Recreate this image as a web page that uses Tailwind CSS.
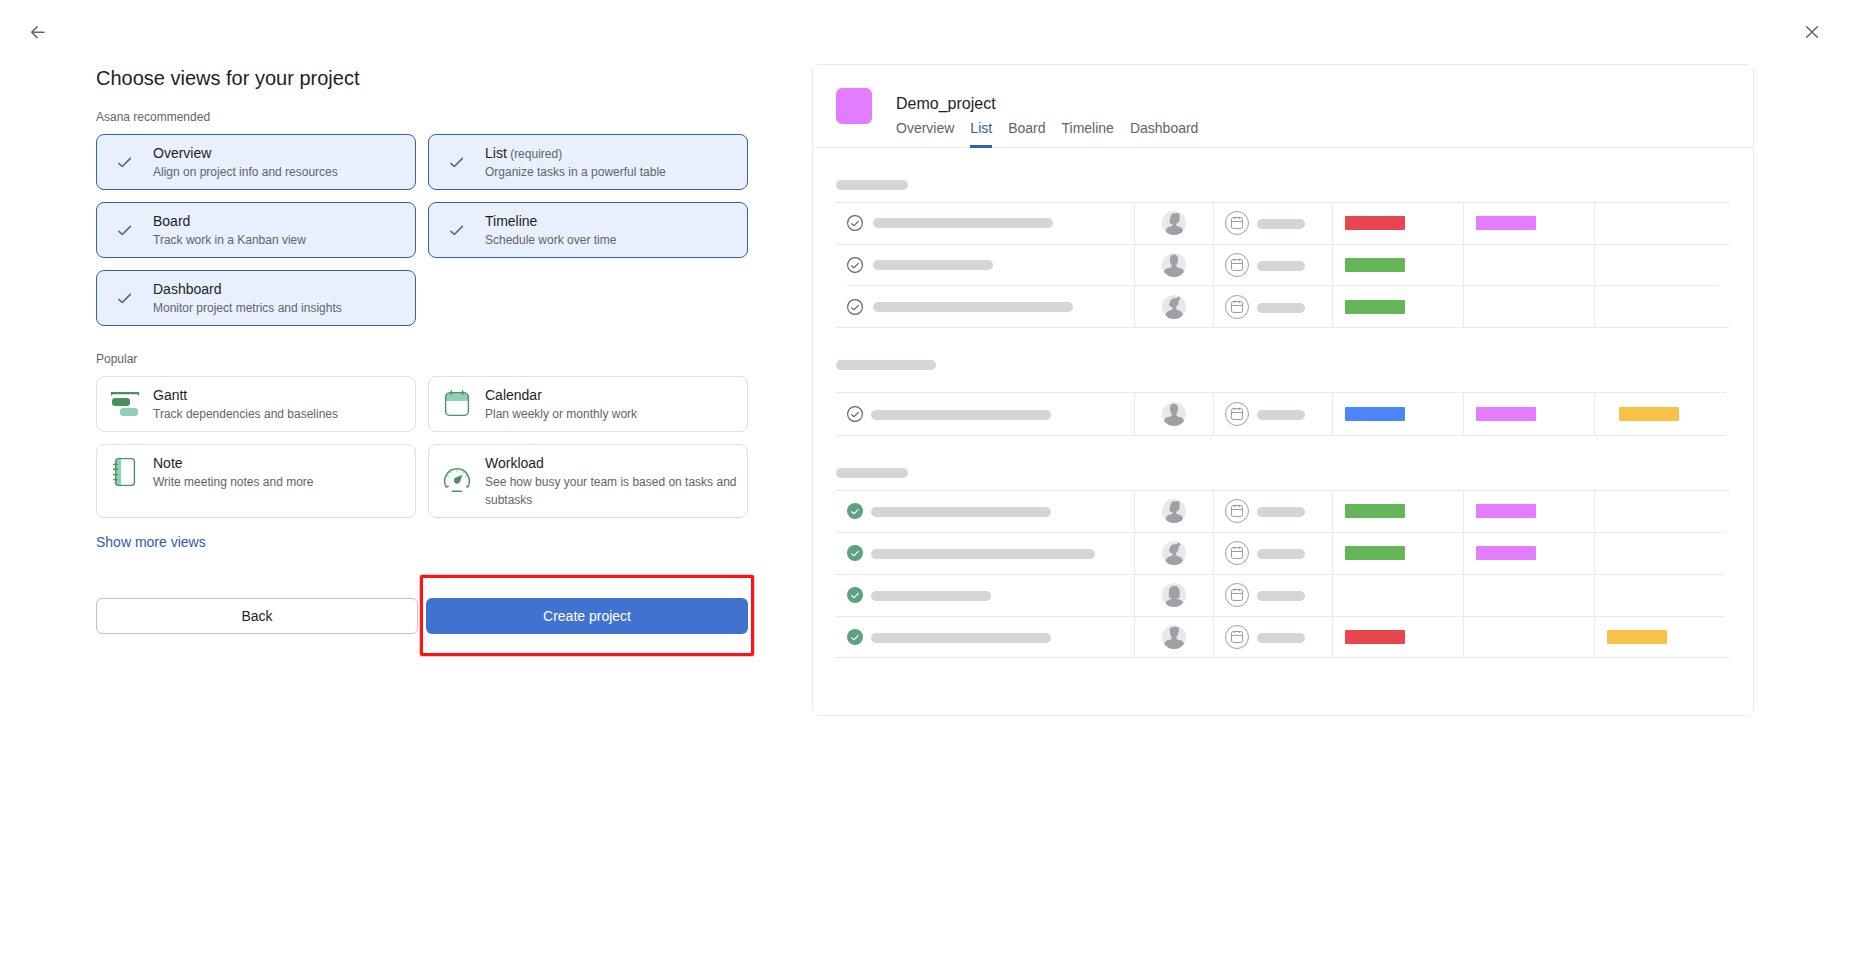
<!DOCTYPE html>
<html lang="en">
<head>
  <meta charset="UTF-8">
  <title>Choose views for your project</title>
  <script src="https://cdn.jsdelivr.net/npm/@tailwindcss/browser@4"></script>
</head>
<body class="bg-white text-[#1e1f21] font-['Liberation_Sans',Arial,sans-serif] h-screen overflow-hidden">
  <header class="h-16 flex items-center justify-between pl-[30px] pr-[29px] text-[#636465]">
    <button aria-label="Back">
      <svg class="w-4 h-4" viewBox="0 0 16 16" fill="none" stroke="currentColor" stroke-width="1.5" stroke-linecap="round" stroke-linejoin="round"><path d="M14 8.3H1.7M7 2.9L1.7 8.3L7 13.6"/></svg>
    </button>
    <button aria-label="Close">
      <svg class="w-4 h-4" viewBox="0 0 16 16" fill="none" stroke="currentColor" stroke-width="1.5" stroke-linecap="round"><path d="M2.7 2.7L13.3 13.3M13.3 2.7L2.7 13.3"/></svg>
    </button>
  </header>

  <main class="flex items-start pl-24">
    <section class="w-[652px]">
      <h1 class="text-xl leading-7">Choose views for your project</h1>
      <h2 class="mt-4 text-xs leading-[18px] text-[#636465]">Asana recommended</h2>
      <div id="recommended" class="mt-2 grid grid-cols-2 gap-3"></div>
      <h2 class="mt-6 text-xs leading-[18px] text-[#636465]">Popular</h2>
      <div id="popular" class="mt-2 grid grid-cols-2 gap-3"></div>
      <a href="#" class="mt-3.5 block text-sm leading-5 text-[#2f5ab0]">Show more views</a>
      <div class="mt-[46px] grid grid-cols-2 gap-2">
        <button class="h-9 rounded-md border border-[#c2c0c5] text-sm">Back</button>
        <div class="relative">
          <button class="h-9 w-full rounded-md bg-[#4272d0] text-sm text-white">Create project</button>
          <div class="absolute -top-[23px] -bottom-[22px] -left-[6px] -right-[6px] rounded-[2px] border-3 border-[#ff1212] shadow-[0_0_0_0.5px_#ff8a8a]"></div>
        </div>
      </div>
    </section>

    <section class="ml-16 w-[942px]">
      <div class="mx-[5px] h-px bg-[#edeaea]"></div>
      <div class="my-1 h-[642px] border-x border-[#edeaea]">
        <div class="flex h-[79px] border-b border-[#edeaea] pl-[23px]">
          <div class="mt-[19px] h-9 w-9 rounded-md bg-[#e37cff]"></div>
          <div class="ml-6 pt-[23px]">
            <div class="text-base leading-6">Demo_project</div>
            <nav class="mt-0.5 flex gap-4 text-sm leading-5 text-[#636465]">
              <span>Overview</span>
              <span class="h-[30px] border-b-3 border-[#335fb5] text-[#2f5ab0]">List</span>
              <span>Board</span>
              <span>Timeline</span>
              <span>Dashboard</span>
            </nav>
          </div>
        </div>
        <div id="sections" class="pl-[23px]"></div>
      </div>
      <div class="mx-[5px] h-px bg-[#edeaea]"></div>
    </section>
  </main>

  <!-- shared shapes -->
  <svg width="0" height="0" class="absolute">
    <defs>
      <pattern id="dots" width="2.6" height="2.6" patternUnits="userSpaceOnUse"><circle cx="1" cy="1" r=".5" fill="#8b8b92"/></pattern>
      <pattern id="dotsLight" width="2.6" height="2.6" patternUnits="userSpaceOnUse"><circle cx="1" cy="1" r=".4" fill="#dbd8d9"/></pattern>
      <clipPath id="round"><circle cx="12" cy="12" r="12"/></clipPath>
      <path id="curl" d="M9.4 3.6C10.2 1.8 12.5 2.8 13.6 2.2C15.4 1.8 18.2 2.8 17.8 4.6C17.4 6 17.8 8 17.4 9.6C17 11.6 15.6 12.4 14.2 12.8V14.8C15.4 15.4 17.2 15.4 18.8 16.4C20.2 17.4 20.8 18.8 20.8 20V24H3.8V20C3.8 18.8 4.4 17.4 5.8 16.4C7.4 15.4 9.2 15.4 10.4 14.8V13C9 13.2 8 13 8 11.8L7.2 10.4L8.2 8C8 6.2 9.4 5.4 9.4 3.6Z"/>
      <path id="plain" d="M12 1.8C14.8 1.8 16.2 3.6 16 5.8C16.2 8.4 15.6 10.4 14.4 11.4V14C15.6 15 18.6 14.8 20.2 16C21.6 17.2 22 18.4 22 20V24H2V20C2 18.4 2.4 17.2 3.8 16C5.4 14.8 8.4 15 9.6 14V11.4C8.4 10.4 7.8 8.4 8 5.8C7.8 3.6 9.2 1.8 12 1.8Z"/>
      <path id="bun" d="M9.4 4.6C11 3 13.2 2.9 14.8 3.7C14.6 2.2 16 1.4 17.2 2C18.6 2.7 18.6 4.9 17 5.4C16.7 5.5 16.5 5.4 16.4 5.4C17 8 16 10.4 14.2 11.6V14.6C15.4 15.2 17.2 15.4 18.8 16.4C20.2 17.4 20.8 18.8 20.8 20V24H3.8V20C3.8 18.8 4.4 17.4 5.8 16.4C7.4 15.4 9.2 15.2 10.4 14.6V12C9 12.3 8 12.2 8 11L6.8 9.8L8 7.6C8 6.2 8.4 5.4 9.4 4.6Z"/>
      <path id="bob" d="M12.2 3C16 3 17.6 5.6 17.6 8.4C17.6 10.8 18.2 12.4 17.4 14.2C16.6 15.4 15.4 15.4 14.4 15.2C14.8 16.6 17.4 16 19.4 17.4C20.6 18.4 21 19.4 21 20.4V24H3.8V20.4C3.8 19.4 4.2 18.4 5.4 17.4C7.4 16 9.8 16.6 10.2 15.2C9.2 15.4 7.8 15.4 7.2 14.2C6.4 12.4 7 10.8 7 8.4C7 5.6 8.6 3 12.2 3Z"/>
      <path id="flat" d="M9 2.6C10.8 1.6 14.6 1.6 16.2 2.6C17.4 3.4 16.8 5 16.6 6.6C16.2 8.8 15.8 10.8 14.4 11.8V14C15.6 15 18.6 14.8 20.2 16C21.6 17.2 22 18.4 22 20V24H2.4V20C2.4 18.4 2.8 17.2 4 16C5.6 14.8 8.4 15 9.6 14V11.8C8.4 10.8 8 8.8 7.8 6.6C7.4 5 7.2 3.4 9 2.6Z"/>
    </defs>
  </svg>

  <script>
    const check = '<svg class="w-4 h-4" viewBox="0 0 16 16" fill="none" stroke="#3f62a8" stroke-width="1.5" stroke-linecap="round" stroke-linejoin="round"><path d="M1.9 9.4L5.3 12.5L13.4 4.4"/></svg>';
    const icons = {
      gantt: '<svg class="w-8 h-8" viewBox="0 0 32 32"><path d="M2 4H30V8L28.2 6.2H3.8L2 8Z" fill="#4a8f5d"/><rect x="3" y="10" width="18" height="8" rx="3" fill="#4a8f5d"/><rect x="11" y="20" width="18" height="8" rx="3" fill="#93cfb5"/></svg>',
      calendar: '<svg class="w-8 h-8" viewBox="0 0 32 32" fill="none" stroke="#4a9461" stroke-width="1.4" stroke-linecap="round"><path d="M4.5 13V9.5Q4.5 4.5 9.5 4.5H22.5Q27.5 4.5 27.5 9.5V13Z" fill="#93cfb5" stroke="none"/><rect x="4.6" y="4.6" width="22.8" height="22.8" rx="4.5"/><path d="M10.2 2.6V6.6M21.7 2.6V6.6"/></svg>',
      note: '<svg class="w-8 h-8" viewBox="0 0 32 32" fill="none" stroke="#4a9461" stroke-width="1.4" stroke-linecap="round"><path d="M6.6 5Q6.6 2.6 9 2.6H12V29.4H9Q6.6 29.4 6.6 27Z" fill="#93cfb5" stroke="none"/><rect x="6.6" y="2.6" width="18.8" height="26.8" rx="2.8"/><path d="M4.6 8.4H8.4M4.6 13.3H8.4M4.6 18.6H8.4M4.6 23.6H8.4"/></svg>',
      workload: '<svg class="w-8 h-8" viewBox="0 0 32 32" fill="none" stroke="#4a9461" stroke-width="1.5" stroke-linecap="round"><path d="M7.2 21.2L5.2 22A12.3 12.3 0 1 1 26.8 22L25.6 21.2"/><path d="M16 5V7.2M6.3 11L8 12M25.7 11L24 12M9.5 6.8L10.3 8M22.5 6.8L21.7 8" stroke="#93cfb5" stroke-width="1"/><path d="M21.4 9.8L19.2 16.4A3.3 3.3 0 1 1 14.2 12.7Z" fill="#4a9461" stroke="none"/><path d="M11.4 26.3H20.6"/></svg>'
    };

    const recommended = [
      { title: 'Overview', text: 'Align on project info and resources' },
      { title: 'List', note: '(required)', text: 'Organize tasks in a powerful table' },
      { title: 'Board', text: 'Track work in a Kanban view' },
      { title: 'Timeline', text: 'Schedule work over time' },
      { title: 'Dashboard', text: 'Monitor project metrics and insights' }
    ];
    const popular = [
      { icon: 'gantt', title: 'Gantt', text: 'Track dependencies and baselines' },
      { icon: 'calendar', title: 'Calendar', text: 'Plan weekly or monthly work' },
      { icon: 'note', title: 'Note', text: 'Write meeting notes and more', top: true },
      { icon: 'workload', title: 'Workload', text: 'See how busy your team is based on tasks and subtasks' }
    ];

    function body(v) {
      return `<div class="flex-1">
        <div class="text-sm leading-5">${v.title}${v.note ? `<span class="text-xs leading-none text-[#636465]"> ${v.note}</span>` : ''}</div>
        <div class="text-xs leading-[18px] text-[#636465]">${v.text}</div>
      </div>`;
    }

    document.getElementById('recommended').innerHTML = recommended.map(v => `
      <div class="flex items-center rounded-lg border border-[#335fb5] bg-[#e8f0fe] py-2 pl-5">
        <div class="w-9">${check}</div>${body(v)}
      </div>`).join('');

    document.getElementById('popular').innerHTML = popular.map(v => `
      <div class="flex rounded-lg border border-[#e0dfe1] py-2 pl-3 pr-1.5">
        <div class="w-11 ${v.top ? 'self-start pt-[3px]' : 'self-center'}">${icons[v.icon]}</div>${body(v)}
      </div>`).join('');

    const colors = { red: 'bg-[#e8464f]', green: 'bg-[#64b658]', pink: 'bg-[#e37cff]', blue: 'bg-[#4c86fb]', yellow: 'bg-[#f8c148]' };
    const full = 'mr-[23px]';
    // h: row height, line: margins of the divider under the row
    const sections = [
      { head: 'mt-8', title: 72, lineTop: 'mt-3 ' + full, gap: 'gap-2.5', bar: 'mt-[7px]', rows: [
        { h: 'h-[41px]', pt: 'pt-2', bar: 180, who: 'curl', tags: ['red', 'pink'], line: full },
        { h: 'h-10', pt: 'pt-2', bar: 120, who: 'plain', tags: ['green'], line: 'ml-[11px] mr-[34px]' },
        { h: 'h-[41px]', pt: 'pt-[9px]', bar: 200, who: 'bun', tags: ['green'], line: full }
      ]},
      { head: 'mt-8', title: 100, lineTop: 'mt-[22px] mr-[27px]', gap: 'gap-2', bar: 'mt-2', rows: [
        { h: 'h-[42px]', pt: 'pt-[9px]', bar: 180, who: 'plain', tags: ['blue', 'pink', 'yellow'], shift: true, line: 'mr-[27px]' }
      ]},
      { head: 'mt-8', title: 72, lineTop: 'mt-3 ' + full, gap: 'gap-2', bar: 'mt-2', done: true, rows: [
        { h: 'h-[41px]', pt: 'pt-2', bar: 180, who: 'curl', tags: ['green', 'pink'], line: 'mr-7' },
        { h: 'h-[41px]', pt: 'pt-2', bar: 224, who: 'bun', tags: ['green', 'pink'], line: 'mr-7' },
        { h: 'h-[41px]', pt: 'pt-2', bar: 120, who: 'bob', tags: [], line: 'mr-7' },
        { h: 'h-10', pt: 'pt-2', bar: 180, who: 'flat', tags: ['red', null, 'yellow'], line: full }
      ]}
    ];

    const status = done => done
      ? '<svg class="mt-1 w-4 h-4" viewBox="0 0 16 16" fill="none"><circle cx="8" cy="8" r="8" fill="#5da182"/><path d="M4.6 8.7L7 10.7L11.4 6.3" stroke="#fff" stroke-width="1.2" stroke-linecap="round"/></svg>'
      : '<svg class="mt-1 w-4 h-4" viewBox="0 0 16 16" fill="none" stroke="#636465" stroke-width="1.15"><circle cx="8" cy="8" r="7.4"/><path d="M4.6 8.7L7 10.7L11.4 6.3" stroke-linecap="round"/></svg>';
    const avatar = who => `<svg class="w-6 h-6" viewBox="0 0 24 24"><g clip-path="url(#round)"><rect width="24" height="24" fill="#ebe8e9"/><rect width="24" height="24" fill="url(#dotsLight)"/><use href="#${who}" fill="#a2a2a8"/><use href="#${who}" fill="url(#dots)"/></g></svg>`;
    const date = '<svg class="w-6 h-6" viewBox="0 0 24 24" fill="none" stroke="#9f9da1"><circle cx="12" cy="12" r="11.5"/><rect x="6.5" y="6.5" width="11" height="11" rx="1.8"/><path d="M6.5 10.5H17.5M9.5 5.8V8M14.5 5.8V8"/></svg>';

    function tagCell(r, i) {
      const tag = r.tags[i];
      return `<div class="${r.pt} ${i < 2 ? 'border-r border-[#edeaea]' : ''} ${i == 2 && r.shift ? 'pl-6' : 'pl-3'}">
        ${tag ? `<div class="mt-[5px] h-3.5 w-[60px] rounded-[1px] ${colors[tag]}"></div>` : ''}
      </div>`;
    }

    document.getElementById('sections').innerHTML = sections.map(s => `
      <div class="h-2.5 rounded-full bg-[#d6d4d5] ${s.head}" style="width:${s.title}px"></div>
      <div class="h-px bg-[#edeaea] ${s.lineTop}"></div>
      ${s.rows.map(r => `
        <div class="grid grid-cols-[299px_79px_119px_131px_131px_1fr] ${r.h}">
          <div class="flex items-start ${s.gap} border-r border-[#edeaea] pl-[11px] ${r.pt}">
            ${status(s.done)}
            <div class="h-2.5 rounded-full bg-[#d6d4d5] ${s.bar}" style="width:${r.bar}px"></div>
          </div>
          <div class="border-r border-[#edeaea] pl-[27px] ${r.pt}">${avatar(r.who)}</div>
          <div class="flex items-start gap-2 border-r border-[#edeaea] pl-[11px] ${r.pt}">
            ${date}
            <div class="mt-2 h-2.5 w-12 rounded-full bg-[#d6d4d5]"></div>
          </div>
          ${[0, 1, 2].map(i => tagCell(r, i)).join('')}
        </div>
        <div class="h-px bg-[#edeaea] ${r.line}"></div>`).join('')}`).join('');
  </script>
</body>
</html>
